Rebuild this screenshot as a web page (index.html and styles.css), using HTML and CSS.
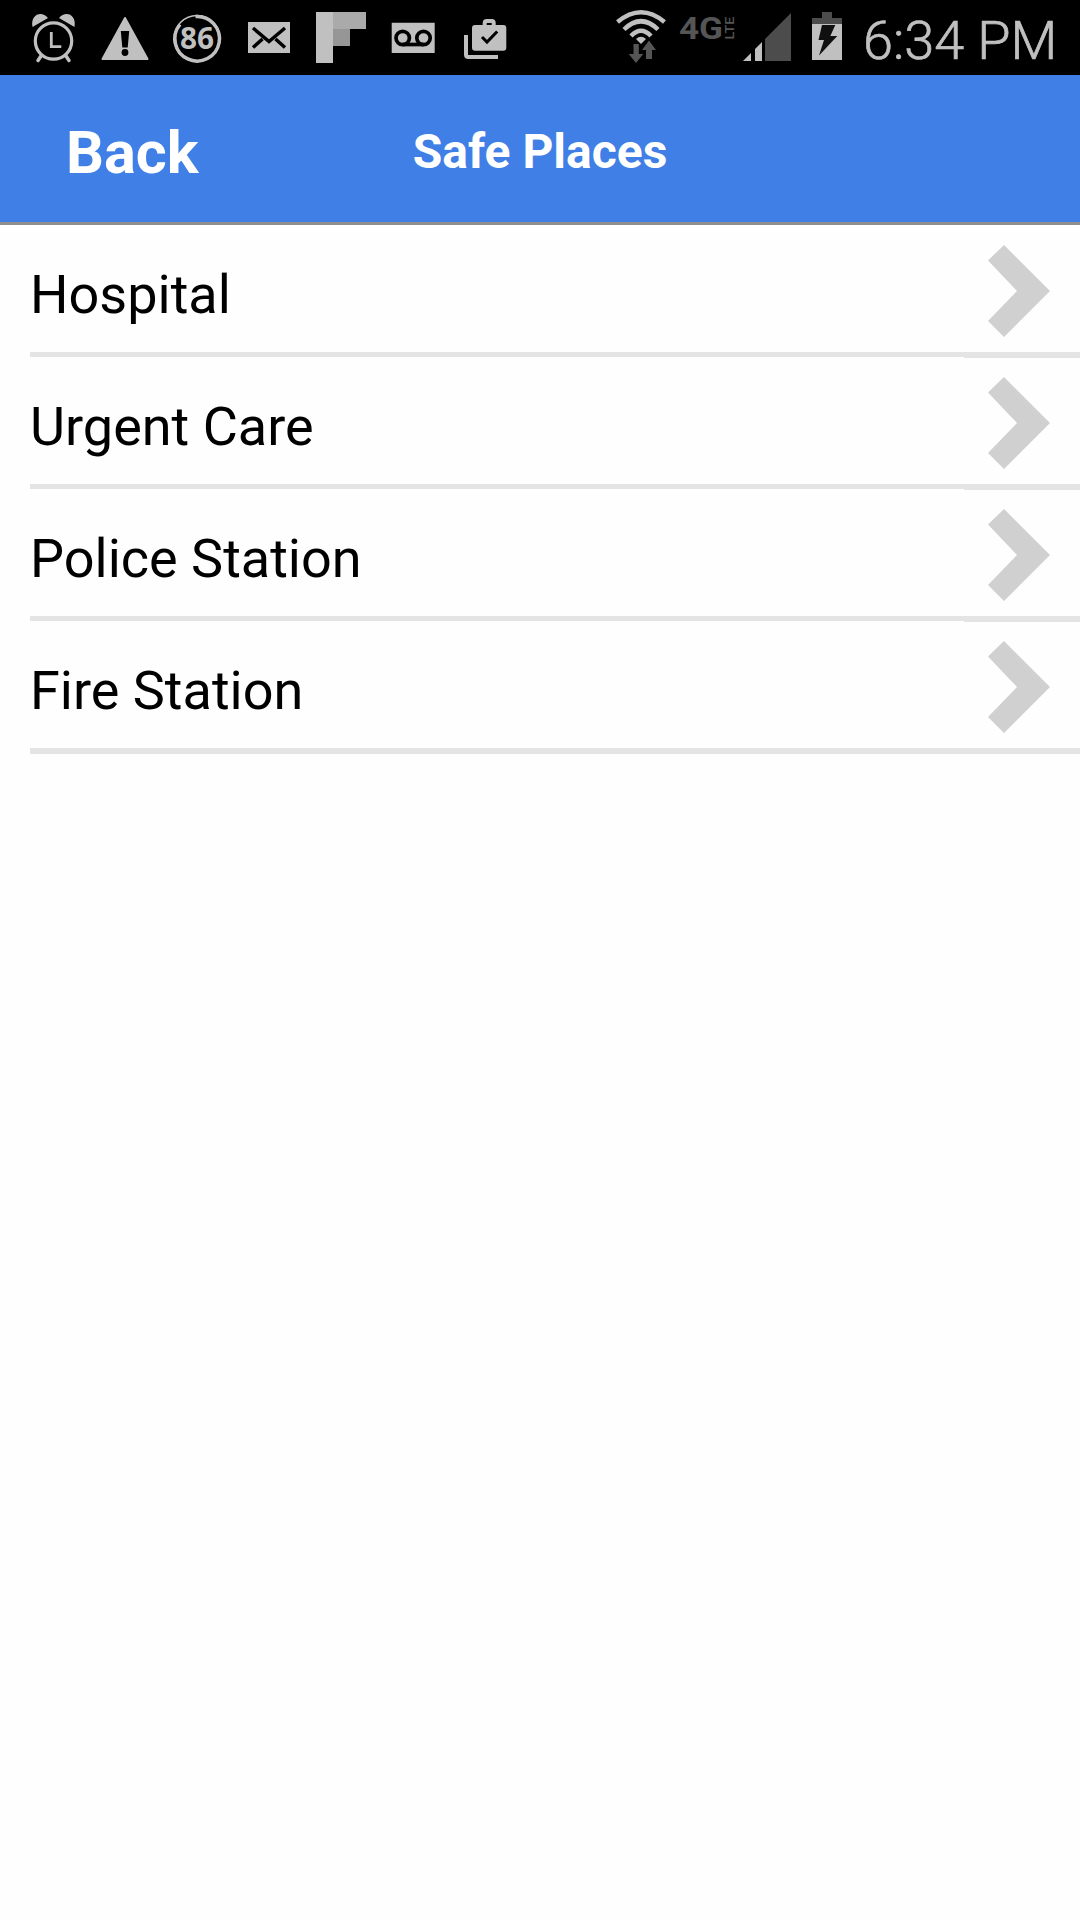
FILE: index.html
```html
<!DOCTYPE html>
<html lang="en">
<head>
<meta charset="utf-8">
<title>Safe Places</title>
<link rel="stylesheet" href="styles.css">
</head>
<body>
<div class="status">
  <div class="notifications">
    <svg class="icon" viewBox="17 0 72 75"><circle cx="53.5" cy="41" r="18.2" fill="none" stroke="#c0c0c0" stroke-width="3.2"/><path d="M32.5 27C30 14 42 10 48 18ZM74.500 27C77 14 65 10 59 18Z" fill="#c0c0c0"/><path d="M41 56l-3 4.500M66 56l3 4.500" stroke="#c0c0c0" stroke-width="3.500" stroke-linecap="round"/><path d="M51.300 32v14.700h10" fill="none" stroke="#c0c0c0" stroke-width="2.800"/></svg>
    <svg class="icon" viewBox="89 0 72 75"><path d="M125 18L147.500 59H102.500Z" fill="#c0c0c0" stroke="#c0c0c0" stroke-width="2" stroke-linejoin="round"/><path d="M120.800 31h8.400l-1.500 16.500h-5.400Z"/><circle cx="125" cy="52.500" r="3.400"/></svg>
    <svg class="icon" viewBox="161 0 72 75"><circle cx="197" cy="38.500" r="23" fill="none" stroke="#c0c0c0" stroke-width="1.500"/><path d="M195.500 16.500A22.300 22.300 0 1 1 180 24.500" fill="none" stroke="#c0c0c0" stroke-width="3.500"/><text class="badge" x="197" y="48.500" text-anchor="middle" textLength="34" lengthAdjust="spacingAndGlyphs">86</text></svg>
    <svg class="icon" viewBox="233 0 72 75"><path d="M248 22h42v31h-42Z" fill="#c0c0c0"/><path d="M253 28L269 41.500L285 28M253 47.500L262.500 39M285 47.500L275.500 39" fill="none" stroke="#000" stroke-width="3.500"/></svg>
    <svg class="icon" viewBox="305 0 72 75"><path d="M316 12h17v51h-17Z" fill="#c0c0c0"/><path d="M333 12h33v17h-33Z" fill="#aaa"/><path d="M333 29h17v17h-17Z" fill="#969696"/></svg>
    <svg class="icon" viewBox="377 0 72 75"><path d="M391.700 22.700h43v30.300h-43Z" fill="#c0c0c0"/><g fill="none" stroke="#000" stroke-width="3.700"><circle cx="402.700" cy="38" r="6.700"/><circle cx="423.500" cy="38" r="6.700"/><path d="M402.700 44.500h20.800"/></g></svg>
    <svg class="icon" viewBox="449 0 72 75"><rect x="472" y="25" width="34.300" height="25.700" rx="3" fill="#c0c0c0"/><path d="M484.700 26v-3q0-2 2-2h5q2 0 2 2v3" fill="none" stroke="#c0c0c0" stroke-width="4"/><path d="M466 35v19.500q0 2.500 2.500 2.500h29.500" fill="none" stroke="#c0c0c0" stroke-width="4"/><path d="M482 37l5 5 10.200-10.500" fill="none" stroke="#000" stroke-width="3"/></svg>
  </div>
  <div class="system">
    <svg class="wifi" viewBox="609 0 64 75"><g fill="none" stroke="#c0c0c0" stroke-width="4.500"><path d="M617.500 22Q641 2.500 664.500 22"/><path d="M624 29.500Q641 13 658 29.500"/><path d="M631 36Q641 25.500 651 36"/></g><path d="M636 39Q641 34.500 646 39L641 44Z" fill="#c0c0c0"/><path d="M633.500 44h5.300v10h4.500L636 63l-7.300-9h4.800ZM649 40.500l7 9.500h-4v9h-6v-9h-4Z" fill="#555"/></svg>
    <svg class="network" viewBox="673 0 66 75"><text class="gen" x="679" y="39" textLength="44" lengthAdjust="spacingAndGlyphs">4G</text><text class="lte" transform="translate(734 39.500) rotate(-90)" textLength="23" lengthAdjust="spacingAndGlyphs">LTE</text></svg>
    <svg class="signal" viewBox="739 0 60 75"><path d="M743 61l8-8v8ZM755 61V49l7-7v19Z" fill="#c0c0c0"/><path d="M765 61V39l26-26v48Z" fill="#4c4c4c"/></svg>
    <svg class="battery" viewBox="799 0 56 75"><path d="M812 24v-6h10v-6h10v6h10v6Z" fill="#4c4c4c"/><path d="M812 24h30v36h-30Z" fill="#c0c0c0"/><path d="M822 25h13.300l-5 11h7L819 55.500l5-15.500h-5.500Z" fill="#101010"/></svg>
    <span class="clock">6:34 PM</span>
  </div>
</div>
<header class="navbar">
  <a class="back">Back</a>
  <h1 class="title">Safe Places</h1>
</header>
<ul class="places">
  <li class="place"><span class="name">Hospital</span><span class="go"><svg class="chevron" viewBox="0 0 62 92"><path d="M16 0L62 46L16 92L0 76L29 46L0 15.500Z"/></svg></span></li>
  <li class="place"><span class="name">Urgent Care</span><span class="go"><svg class="chevron" viewBox="0 0 62 92"><path d="M16 0L62 46L16 92L0 76L29 46L0 15.500Z"/></svg></span></li>
  <li class="place"><span class="name">Police Station</span><span class="go"><svg class="chevron" viewBox="0 0 62 92"><path d="M16 0L62 46L16 92L0 76L29 46L0 15.500Z"/></svg></span></li>
  <li class="place"><span class="name">Fire Station</span><span class="go"><svg class="chevron" viewBox="0 0 62 92"><path d="M16 0L62 46L16 92L0 76L29 46L0 15.500Z"/></svg></span></li>
</ul>
</body>
</html>
```
FILE: styles.css
```css
* { box-sizing: border-box; }
body {
  margin: 0;
  min-height: 1920px;
  background: #fefefe;
  color: #000;
  font-family: Roboto, sans-serif;
}
svg { display: block; flex: none; height: 75px; }
.status {
  display: flex;
  justify-content: space-between;
  height: 75px;
  padding: 0 24px 0 17px;
  background: #000;
}
.notifications, .system { display: flex; }
.icon { width: 72px; }
.wifi { width: 64px; }
.network { width: 66px; }
.signal { width: 60px; }
.battery { width: 56px; }
.system { width: 447px; }
.badge { font: 700 30px "Open Sans", sans-serif; fill: #c0c0c0; }
.gen { font: 700 31px Roboto, sans-serif; fill: #555; }
.lte { font: 500 13px Roboto, sans-serif; fill: #555; }
.clock {
  padding-left: 8px;
  font-size: 54px;
  font-weight: 300;
  line-height: 82px;
  white-space: nowrap;
  color: #c0c0c0;
  -webkit-text-stroke: 0.7px #c0c0c0;
}
.navbar {
  display: grid;
  grid-template-columns: 1fr auto 1fr;
  align-items: center;
  height: 150px;
  border-bottom: 3px solid #909090;
  background: #4080e6;
  color: #fff;
}
.back { padding: 8px 0 0 66px; font-size: 59.5px; font-weight: 700; line-height: 70px; }
.title { margin: 0; padding-top: 6px; font-size: 48px; font-weight: 700; line-height: 56px; }
.places { margin: 0; padding: 1px 0 0 30px; list-style: none; }
.place { display: flex; align-items: flex-start; height: 132px; }
.name {
  flex: 1;
  height: 131px;
  padding-top: 6px;
  border-bottom: 5px solid #e4e4e4;
  font-size: 54px;
  line-height: 126px;
}
.go {
  width: 116px;
  height: 132px;
  padding: 19px 0 0 24px;
  border-bottom: 6px solid #e4e4e4;
}
.chevron { width: 62px; height: 92px; fill: #d0d0d0; }
.place:last-child .name { height: 132px; border-bottom-width: 6px; }
```
